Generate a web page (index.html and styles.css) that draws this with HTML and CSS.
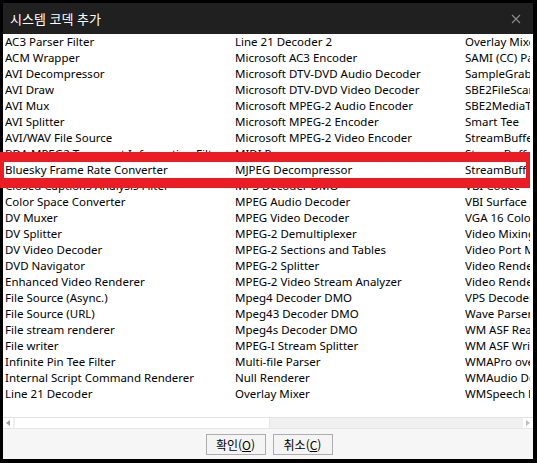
FILE: index.html
```html
<!DOCTYPE html>
<html lang="ko">
<head>
<meta charset="utf-8">
<title>시스템 코덱 추가</title>
<link rel="stylesheet" href="styles.css">
</head>
<body>
<div class="window">
  <div class="titlebar">
    <span class="title">시스템 코덱 추가</span>
    <svg class="close" width="10" height="10" viewBox="0 0 10 10"><path d="M1 1 L9 9 M9 1 L1 9" stroke="#8c8c8c" stroke-width="1.1" fill="none"/></svg>
  </div>
  <div class="list">
    <div class="col">
      <div class="item">AC3 Parser Filter</div>
      <div class="item">ACM Wrapper</div>
      <div class="item">AVI Decompressor</div>
      <div class="item">AVI Draw</div>
      <div class="item">AVI Mux</div>
      <div class="item">AVI Splitter</div>
      <div class="item">AVI/WAV File Source</div>
      <div class="item">BDA MPEG2 Transport Information Filter</div>
      <div class="item">Bluesky Frame Rate Converter</div>
      <div class="item">Closed Captions Analysis Filter</div>
      <div class="item">Color Space Converter</div>
      <div class="item">DV Muxer</div>
      <div class="item">DV Splitter</div>
      <div class="item">DV Video Decoder</div>
      <div class="item">DVD Navigator</div>
      <div class="item">Enhanced Video Renderer</div>
      <div class="item">File Source (Async.)</div>
      <div class="item">File Source (URL)</div>
      <div class="item">File stream renderer</div>
      <div class="item">File writer</div>
      <div class="item">Infinite Pin Tee Filter</div>
      <div class="item">Internal Script Command Renderer</div>
      <div class="item">Line 21 Decoder</div>
    </div>
    <div class="col">
      <div class="item">Line 21 Decoder 2</div>
      <div class="item">Microsoft AC3 Encoder</div>
      <div class="item">Microsoft DTV-DVD Audio Decoder</div>
      <div class="item">Microsoft DTV-DVD Video Decoder</div>
      <div class="item">Microsoft MPEG-2 Audio Encoder</div>
      <div class="item">Microsoft MPEG-2 Encoder</div>
      <div class="item">Microsoft MPEG-2 Video Encoder</div>
      <div class="item">MIDI Parser</div>
      <div class="item">MJPEG Decompressor</div>
      <div class="item">MP3 Decoder DMO</div>
      <div class="item">MPEG Audio Decoder</div>
      <div class="item">MPEG Video Decoder</div>
      <div class="item">MPEG-2 Demultiplexer</div>
      <div class="item">MPEG-2 Sections and Tables</div>
      <div class="item">MPEG-2 Splitter</div>
      <div class="item">MPEG-2 Video Stream Analyzer</div>
      <div class="item">Mpeg4 Decoder DMO</div>
      <div class="item">Mpeg43 Decoder DMO</div>
      <div class="item">Mpeg4s Decoder DMO</div>
      <div class="item">MPEG-I Stream Splitter</div>
      <div class="item">Multi-file Parser</div>
      <div class="item">Null Renderer</div>
      <div class="item">Overlay Mixer</div>
    </div>
    <div class="col col-last">
      <div class="item">Overlay Mixer2</div>
      <div class="item">SAMI (CC) Parser</div>
      <div class="item">SampleGrabber</div>
      <div class="item">SBE2FileScan</div>
      <div class="item">SBE2MediaTypeProfile</div>
      <div class="item">Smart Tee</div>
      <div class="item">StreamBufferSink</div>
      <div class="item">StreamBufferSink2</div>
      <div class="item">StreamBufferSource</div>
      <div class="item">VBI Codec</div>
      <div class="item">VBI Surface Allocator</div>
      <div class="item">VGA 16 Color Ditherer</div>
      <div class="item">Video Mixing Renderer 9</div>
      <div class="item">Video Port Manager</div>
      <div class="item">Video Renderer</div>
      <div class="item">Video Renderer</div>
      <div class="item">VPS Decoder</div>
      <div class="item">Wave Parser</div>
      <div class="item">WM ASF Reader</div>
      <div class="item">WM ASF Writer</div>
      <div class="item">WMAPro over S/PDIF Filter</div>
      <div class="item">WMAudio Decoder DMO</div>
      <div class="item">WMSpeech Decoder DMO</div>
    </div>
  </div>
  <div class="hscroll">
    <div class="arrow left"><svg width="4" height="6" viewBox="0 0 4 6"><path d="M4 0 L0 3 L4 6 Z" fill="#a0a0a0"/></svg></div>
    <div class="thumb"></div>
    <div class="track"></div>
    <div class="arrow right"><svg width="4" height="6" viewBox="0 0 4 6"><path d="M0 0 L4 3 L0 6 Z" fill="#c0c0c0"/></svg></div>
  </div>
  <div class="footer">
    <button class="btn">확인(<u>O</u>)</button>
    <button class="btn">취소(<u>C</u>)</button>
  </div>
</div>
<div class="highlight"></div>
</body>
</html>
```

FILE: styles.css
```css
html, body {
  margin: 0;
  padding: 0;
  background: #000;
}
body {
  width: 537px;
  height: 463px;
  overflow: hidden;
  position: relative;
  font-family: "Noto Sans", "Noto Sans CJK KR", sans-serif;
}
.window {
  margin: 3px 4px 4px 3px;
  width: 530px;
  height: 456px;
  display: flex;
  flex-direction: column;
  background: #fff;
}
.titlebar {
  height: 31px;
  flex: none;
  background: #202020;
  display: flex;
  align-items: center;
  justify-content: space-between;
  padding: 0 12px 0 7px;
}
.title {
  color: #fff;
  font-family: "Noto Sans CJK KR", sans-serif;
  font-size: 13px;
}
.close {
  display: block;
}
.list {
  height: 383px;
  flex: none;
  display: flex;
  overflow: hidden;
  padding-left: 2px;
  background: #fff;
}
.col {
  width: 230px;
  flex: none;
  display: flex;
  flex-direction: column;
}
.col-last {
  width: 65px;
}
.item {
  height: 16px;
  line-height: 16px;
  font-size: 11.5px;
  color: #000;
  white-space: nowrap;
  overflow: hidden;
  width: 228px;
}
.col-last .item {
  width: 65px;
}
.hscroll {
  height: 10px;
  flex: none;
  display: flex;
  border-top: 1px solid #e2e2e2;
  border-bottom: 1px solid #e6e6e6;
  background: #f0f0f0;
}
.arrow {
  width: 10px;
  display: flex;
  align-items: center;
  justify-content: center;
  background: #fff;
}
.thumb {
  margin-left: 2px;
  width: 254px;
  background: #fff;
  border-right: 1px solid #e6e6e6;
}
.track {
  flex: 1;
  background: #f0f0f0;
}
.footer {
  flex: 1;
  background: #f6f6f6;
  display: flex;
  justify-content: center;
  align-items: center;
  gap: 7px;
  padding-left: 2px;
}
.btn {
  width: 60px;
  height: 21px;
  padding: 0;
  border: 1px solid #adadad;
  background: #f4f4f4;
  font-family: "Noto Sans CJK KR", sans-serif;
  font-size: 12px;
  color: #000;
  line-height: 19px;
}
.highlight {
  position: absolute;
  left: 0;
  top: 152px;
  width: 522px;
  height: 16px;
  border: solid #ec1c24;
  border-width: 10px 4px;
}
```
